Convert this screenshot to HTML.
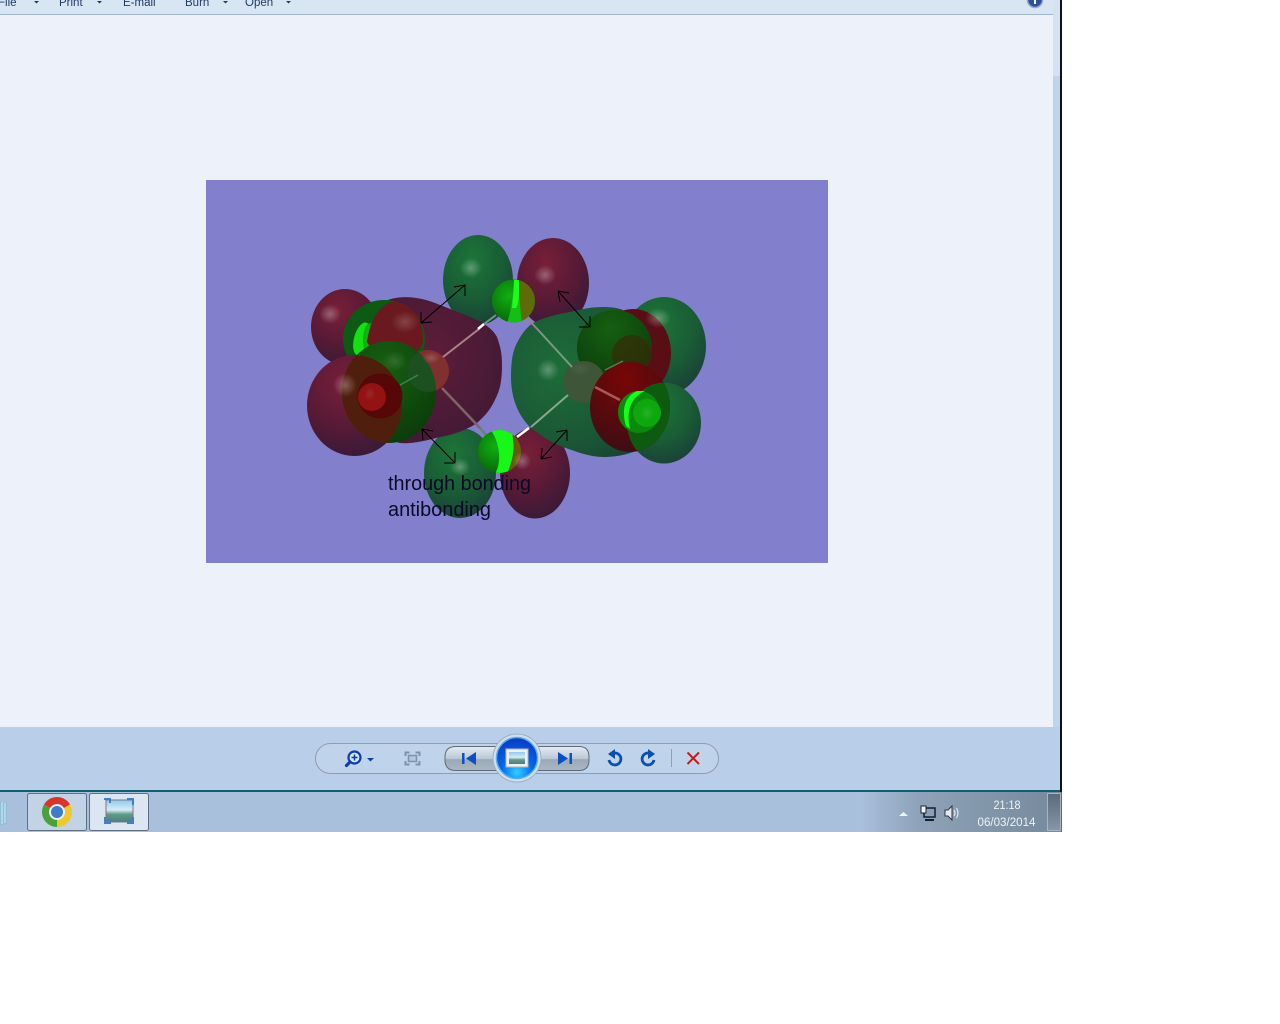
<!DOCTYPE html>
<html><head><meta charset="utf-8"><style>
html,body{margin:0;padding:0;background:#fff;width:1280px;height:1024px;overflow:hidden}
svg{position:absolute;left:0;top:0;display:block}
text{font-family:"Liberation Sans",sans-serif}
</style></head><body>
<svg width="1280" height="1024" viewBox="0 0 1280 1024" xmlns="http://www.w3.org/2000/svg">
<defs>
<radialGradient id="m" cx="40%" cy="28%" r="78%"><stop offset="0" stop-color="#781f38"/><stop offset=".55" stop-color="#581a36"/><stop offset="1" stop-color="#351a38"/></radialGradient>
<radialGradient id="mb" cx="45%" cy="40%" r="70%"><stop offset="0" stop-color="#5f1c38"/><stop offset="1" stop-color="#3f1a36"/></radialGradient>
<radialGradient id="g" cx="42%" cy="28%" r="80%"><stop offset="0" stop-color="#1c7538"/><stop offset=".55" stop-color="#1a5c36"/><stop offset="1" stop-color="#1a3c38"/></radialGradient>
<radialGradient id="gb" cx="35%" cy="40%" r="75%"><stop offset="0" stop-color="#1d6d38"/><stop offset=".7" stop-color="#1a5636"/><stop offset="1" stop-color="#1a4036"/></radialGradient>
<radialGradient id="dg" cx="45%" cy="25%" r="80%"><stop offset="0" stop-color="#175f12"/><stop offset="1" stop-color="#0a3a0a"/></radialGradient>
<radialGradient id="rd" cx="45%" cy="20%" r="85%"><stop offset="0" stop-color="#780606"/><stop offset="1" stop-color="#3a0e14"/></radialGradient>
<radialGradient id="bg" cx="40%" cy="38%" r="70%"><stop offset="0" stop-color="#10b010"/><stop offset="1" stop-color="#066008"/></radialGradient>
<radialGradient id="hl"><stop offset="0" stop-color="#fff" stop-opacity=".3"/><stop offset="1" stop-color="#fff" stop-opacity="0"/></radialGradient>
<linearGradient id="btn" x1="0" y1="0" x2="0" y2="1"><stop offset="0" stop-color="#e4ebf2"/><stop offset=".5" stop-color="#bcc8d5"/><stop offset=".55" stop-color="#9aa9b8"/><stop offset="1" stop-color="#aab7c3"/></linearGradient>
<radialGradient id="orb" cx="50%" cy="85%" r="75%"><stop offset="0" stop-color="#30d0ff"/><stop offset=".5" stop-color="#0868e8"/><stop offset="1" stop-color="#0a40c8"/></radialGradient>
<linearGradient id="tb" x1="0" y1="0" x2="1" y2="0"><stop offset="0" stop-color="#a9c0dc"/><stop offset=".3" stop-color="#8da2b8"/><stop offset="1" stop-color="#76899c"/></linearGradient>
<linearGradient id="pic" x1="0" y1="0" x2="0" y2="1"><stop offset="0" stop-color="#8fcaf0"/><stop offset=".45" stop-color="#d8ecf5"/><stop offset=".65" stop-color="#5f9a88"/><stop offset="1" stop-color="#4a7f82"/></linearGradient>
<linearGradient id="show" x1="0" y1="0" x2="0" y2="1"><stop offset="0" stop-color="#5a6a7a"/><stop offset=".5" stop-color="#6f8092"/><stop offset="1" stop-color="#8797a8"/></linearGradient>
<clipPath id="cLL"><ellipse cx="354.500" cy="405.500" rx="47.500" ry="50.500"/></clipPath>
<clipPath id="cG"><ellipse cx="389" cy="392" rx="47" ry="51"/></clipPath>
<clipPath id="cR"><ellipse cx="630" cy="407" rx="40" ry="45"/></clipPath>
<clipPath id="cA1"><circle cx="513.500" cy="301" r="21.500"/></clipPath>
<clipPath id="cA2"><circle cx="499.500" cy="451.500" r="21.500"/></clipPath>
</defs>

<!-- window -->
<rect width="1060" height="790" fill="#edf2fa"/>
<rect width="1053" height="14" fill="#d8e5f2"/>
<rect y="14" width="1053" height="1" fill="#a5b4cd"/>
<rect x="1053" y="0" width="7" height="727" fill="#bfd3ea"/>
<rect x="1053" y="0" width="7" height="76" fill="#d4e1f0"/>
<g font-size="11.500" fill="#1f3b66">
<text x="-2" y="6">File</text><text x="59" y="6">Print</text><text x="123" y="6">E-mail</text><text x="185" y="6">Burn</text><text x="245" y="6">Open</text>
</g>
<g fill="#1f3b66"><path d="M34 1h5l-2.500 2.500z"/><path d="M97 1h5l-2.500 2.500z"/><path d="M223 1h5l-2.500 2.500z"/><path d="M286 1h5l-2.500 2.500z"/></g>
<circle cx="1035" cy="0" r="7.500" fill="#2c4f9e" stroke="#9aa8bd" stroke-width="1.500"/><rect x="1034" y="0" width="2" height="4" fill="#fff"/>

<!-- image -->
<rect x="206" y="180" width="622" height="383" fill="#8280cc"/>

<!-- back lobes -->
<ellipse cx="478" cy="280" rx="35" ry="45" fill="url(#g)"/>
<ellipse cx="553" cy="283" rx="36" ry="45" fill="url(#m)"/>
<ellipse cx="460" cy="473" rx="36" ry="45" fill="url(#g)"/>
<ellipse cx="535" cy="473" rx="35" ry="45.500" fill="url(#m)"/>
<ellipse cx="345" cy="327" rx="34" ry="38" fill="url(#m)"/>
<path d="M378 305C392 295 415 294 440 305C455 311 466 315 477 320C487 325 494 331 497 337C501 348 502 355 502 365C502 380 500 388 498 393C492 408 486 415 477 423C465 431 452 435 440 437C425 441 412 444 400 443C380 440 360 400 365 350C366 330 370 315 378 305Z" fill="url(#mb)"/>
<ellipse cx="664" cy="346" rx="42" ry="49" fill="url(#g)"/>
<ellipse cx="664" cy="423" rx="37" ry="40.500" fill="url(#g)"/>
<path d="M511 377C511 360 513 350 517 343C522 333 527 327 533 323C545 317 558 314 570 312C582 309 592 307 603 307C612 307 618 308 623 310L655 380L650 440L633 452C622 456 612 457 603 457C590 457 577 452 563 447C550 442 540 435 530 427C518 415 511 398 511 377Z" fill="url(#gb)"/>
<!-- left inner -->
<ellipse cx="384" cy="339" rx="41" ry="39" fill="#0d5a12"/>
<ellipse cx="362" cy="339" rx="8" ry="17" fill="#14e014" transform="rotate(15 362 339)"/>
<ellipse cx="370" cy="340" rx="7" ry="17" fill="#0ea80f" opacity=".8"/>
<path d="M367 342C370 320 380 302 395 302C412 303 423 320 423 338C423 350 415 356 400 356C385 356 372 352 367 342Z" fill="#6a1a1e"/>
<ellipse cx="354.500" cy="405.500" rx="47.500" ry="50.500" fill="url(#m)"/>
<circle cx="428" cy="371" r="21" fill="#80302f"/>
<ellipse cx="389" cy="392" rx="47" ry="51" fill="url(#dg)"/>
<g clip-path="url(#cG)">
<ellipse cx="354.500" cy="405.500" rx="47.500" ry="50.500" fill="#4f1e0c"/>
<circle cx="428" cy="371" r="21" fill="#1c5020"/>
</g>
<circle cx="380" cy="396" r="22.500" fill="#560808"/>
<circle cx="372" cy="397" r="14" fill="#941212"/>
<!-- right inner -->
<ellipse cx="633" cy="353" rx="38" ry="44" fill="#580e14"/>
<ellipse cx="614.500" cy="348" rx="37.500" ry="38" fill="url(#dg)"/>
<circle cx="632" cy="355" r="20" fill="#3a2806" opacity=".65"/>
<circle cx="584" cy="382" r="21" fill="#3e5538"/>
<ellipse cx="630" cy="407" rx="40" ry="45" fill="url(#rd)"/>
<g clip-path="url(#cR)"><ellipse cx="664" cy="423" rx="37" ry="40.500" fill="#0e5a10"/></g>
<circle cx="639" cy="412" r="21" fill="#0a8a0c"/>
<path d="M637 391C625 396 621 410 626 426L630 429C626 412 630 398 645 391Z" fill="#16ff16"/>
<circle cx="647" cy="413" r="14" fill="#0ea80e"/>
<ellipse cx="664" cy="423" rx="37" ry="40.500" fill="none"/>
<!-- bonds -->
<g stroke-linecap="butt" fill="none">
<path d="M443 357L479 329" stroke="#a98488" stroke-width="2"/>
<path d="M478 329L484 324" stroke="#fff" stroke-width="2.500"/>
<path d="M484 324L496 315" stroke="#6f9a80" stroke-width="2"/>
<path d="M442 388L480 428" stroke="#7f6468" stroke-width="2.500"/>
<path d="M480 428L486 435" stroke="#5f8a6a" stroke-width="2.500"/>
<path d="M400 385L418 375" stroke="#3f8050" stroke-width="1.500"/>
<path d="M527 318L540 332" stroke="#a08088" stroke-width="2"/>
<path d="M540 332L572 367" stroke="#7d9a80" stroke-width="2"/>
<path d="M568 395L531 427" stroke="#8aa88a" stroke-width="2"/>
<path d="M529 428L517 437" stroke="#fff" stroke-width="2.500"/>
<path d="M595 387L620 400" stroke="#a85a5a" stroke-width="2.500"/>
<path d="M605 370L623 361" stroke="#5a7a50" stroke-width="1.500"/>
</g>
<!-- bright atoms -->
<circle cx="513.500" cy="301" r="21.500" fill="url(#bg)"/>
<g clip-path="url(#cA1)">
<rect x="516" y="279" width="20" height="44" fill="#5f6a0a"/>
<path d="M514 280L519 280L519 292C520 305 521 315 522 323L507 323C511 312 513 295 514 280Z" fill="#12c012"/>
<path d="M514 280L519 280L519 292C519 300 518 305 516 308L512 308C513 298 514 290 514 280Z" fill="#1cff1c"/>
</g>
<circle cx="499.500" cy="451.500" r="21.500" fill="url(#bg)"/>
<g clip-path="url(#cA2)">
<path d="M507 428H522V474H505C511 462 512 445 507 428Z" fill="#6a5a10"/>
<path d="M490 429H512L513 440C515 450 512 462 507 474L495 474C502 462 500 442 490 429Z" fill="#18f818"/>
</g>
<!-- highlights -->
<ellipse cx="471" cy="268" rx="11" ry="10" fill="url(#hl)"/>
<ellipse cx="545" cy="275" rx="11" ry="10" fill="url(#hl)"/>
<ellipse cx="460" cy="467" rx="10" ry="9" fill="url(#hl)"/>
<ellipse cx="522" cy="461" rx="9" ry="9" fill="url(#hl)"/>
<ellipse cx="330" cy="314" rx="11" ry="10" fill="url(#hl)"/>
<ellipse cx="345" cy="385" rx="12" ry="12" fill="url(#hl)"/>
<ellipse cx="405" cy="322" rx="14" ry="11" fill="url(#hl)" opacity=".6"/>
<ellipse cx="395" cy="361" rx="12" ry="10" fill="url(#hl)" opacity=".4"/>
<ellipse cx="548" cy="370" rx="11" ry="11" fill="url(#hl)"/>
<ellipse cx="658" cy="318" rx="13" ry="10" fill="url(#hl)"/>
<ellipse cx="647" cy="413" rx="7" ry="8" fill="url(#hl)" opacity=".35"/>
<ellipse cx="370" cy="394" rx="6" ry="7" fill="url(#hl)" opacity=".3"/>
<ellipse cx="431" cy="358" rx="9" ry="6" fill="url(#hl)" opacity=".6"/>
<ellipse cx="580" cy="369" rx="11" ry="7" fill="url(#hl)" opacity=".2"/>
<!-- arrows -->
<g stroke="#000" stroke-width="1" fill="none">
<path d="M421 323L465 285M454 287L465 285L465 296M421 312L421 323L432 322"/>
<path d="M558 291L590 327M558 291L569 293M558 291L560 302M590 316L590 327L579 327"/>
<path d="M422 429L455 463M422 429L433 431M422 429L423 440M455 452L455 463L444 463"/>
<path d="M541 459L567 430M541 459L552 457M541 459L542 448M567 430L556 432M567 430L567 441"/>
</g>
<text x="388" y="490" font-size="20" fill="#0a0a28" textLength="143" lengthAdjust="spacingAndGlyphs">through bonding</text>
<text x="388" y="516" font-size="20" fill="#0a0a28" textLength="103" lengthAdjust="spacingAndGlyphs">antibonding</text>

<!-- bottom panel -->
<rect y="727" width="1053" height="63" fill="#b9cfe9"/>
<rect x="1053" y="727" width="7" height="63" fill="#b9cfe9"/>
<rect x="315.500" y="743.500" width="403" height="30" rx="15" fill="#bfd3ea" stroke="#8f9db2"/>
<!-- zoom -->
<circle cx="354.500" cy="757.500" r="6" fill="#d6e4f4" stroke="#0b3fae" stroke-width="2.200"/>
<path d="M350 762L346.500 765.500" stroke="#0b3fae" stroke-width="3.200" stroke-linecap="round"/>
<path d="M351.500 757.500H357.500M354.500 754.500V760.500" stroke="#0b3fae" stroke-width="1.500"/>
<path d="M367 758h7l-3.500 3.500z" fill="#0b3fae"/>
<!-- fit -->
<rect x="408.500" y="755.500" width="8" height="6" fill="#b3c6dc" stroke="#7d93ad" stroke-width="1.500"/>
<path d="M405.500 756V752.500H409.500M415.500 752.500H419.500V756M419.500 761V764.500H415.500M409.500 764.500H405.500V761" fill="none" stroke="#7d93ad" stroke-width="2"/>
<!-- prev/next -->
<path d="M500 746.500H456Q445 746.500 445 757V760Q445 770.500 456 770.500H500Z" fill="url(#btn)" stroke="#5f6b78"/>
<path d="M535 746.500H579Q589 746.500 589 757V760Q589 770.500 579 770.500H535Z" fill="url(#btn)" stroke="#5f6b78"/>
<rect x="462" y="753" width="2.500" height="11" fill="#0b4fc0"/><path d="M476 752V765L466 758.500Z" fill="#0b4fc0"/>
<rect x="569.500" y="753" width="2.500" height="11" fill="#0b4fc0"/><path d="M558 752V765L568 758.500Z" fill="#0b4fc0"/>
<circle cx="517" cy="758" r="24" fill="#d2deeb" stroke="#9fb0c4"/>
<circle cx="517" cy="758" r="20.500" fill="url(#orb)" stroke="#4fb0f4" stroke-width="1.500"/>
<rect x="506" y="749" width="22" height="18" fill="#eef1f4" stroke="#b0b8c0"/>
<rect x="509" y="752" width="16" height="12" fill="url(#pic)"/>
<!-- rotate -->
<path d="M614 753A6 6 0 1 1 609 760" fill="none" stroke="#0b4fb0" stroke-width="2.800"/>
<path d="M608 754L615 749V759Z" fill="#0b4fb0"/>
<path d="M649 753A6 6 0 1 0 654 760" fill="none" stroke="#0b4fb0" stroke-width="2.800" transform="translate(0 0)"/>
<path d="M655 754L648 749V759Z" fill="#0b4fb0"/>
<rect x="671" y="749" width="1" height="18" fill="#8fa0b4"/>
<path d="M687.500 752.500L699 764M699 752.500L687.500 764" stroke="#c41a1a" stroke-width="2"/>

<!-- window frame -->
<rect x="1060" y="0" width="2" height="792" fill="#0a1420"/>
<rect y="790" width="1060" height="2" fill="#0f5f6f"/>

<!-- taskbar -->
<rect y="792" width="1062" height="40" fill="#a9c0dc"/>
<rect x="860" y="792" width="202" height="40" fill="url(#tb)"/>
<path d="M0 801L7 803V824L0 825Z" fill="#8dbfdc"/><path d="M2 802V824M5 803V823" stroke="#d8ecf5"/>
<rect x="27.500" y="793.500" width="59" height="37" rx="2" fill="#c3d3e6" stroke="#5f6f82"/>
<rect x="89.500" y="793.500" width="59" height="37" rx="2" fill="#dbe6f2" stroke="#5f6f82"/>
<!-- chrome -->
<path d="M57 812L44 804.500A15 15 0 0 1 70 804.500Z" fill="#d8342c"/>
<path d="M57 812L70 804.500A15 15 0 0 1 57 827Z" fill="#efc92c"/>
<path d="M57 812L57 827A15 15 0 0 1 44 804.500Z" fill="#4aa03a"/>
<circle cx="57" cy="812" r="8" fill="#eef"/><circle cx="57" cy="812" r="6" fill="#3d7cc8"/>
<!-- gallery -->
<rect x="106" y="800" width="27" height="22" fill="url(#pic)" stroke="#778"/>
<path d="M104 798h7v5h-2v-3h-5zM127 798h7v7h-2v-5h-5zM104 817h2v5h5v2h-7zM132 817h2v7h-7v-2h5z" fill="#3f80c8"/>
<!-- tray -->
<path d="M899 816h9l-4.500-4z" fill="#eef3f8"/>
<rect x="924" y="808" width="11" height="9" fill="none" stroke="#10202e" stroke-width="1.500"/>
<rect x="921" y="806" width="5" height="7" fill="#eef3f8" stroke="#223"/><path d="M925 820h9" stroke="#10202e" stroke-width="2"/>
<path d="M945 810h3l4-4v14l-4-4h-3z" fill="#e4eaf0" stroke="#334"/>
<path d="M954 810q2 3 0 6M956.500 808q3 5 0 10" stroke="#eef3f8" fill="none"/>
<text x="1007" y="809" font-size="11.500" fill="#eef3f8" text-anchor="middle" textLength="27" lengthAdjust="spacingAndGlyphs">21:18</text>
<text x="1006.500" y="826" font-size="11.500" fill="#eef3f8" text-anchor="middle" textLength="58" lengthAdjust="spacingAndGlyphs">06/03/2014</text>
<rect x="1047.500" y="793.500" width="13" height="37" fill="url(#show)" stroke="#a8b4be"/>
<rect x="1061" y="792" width="1" height="40" fill="#5a6a78"/>
</svg>
</body></html>
